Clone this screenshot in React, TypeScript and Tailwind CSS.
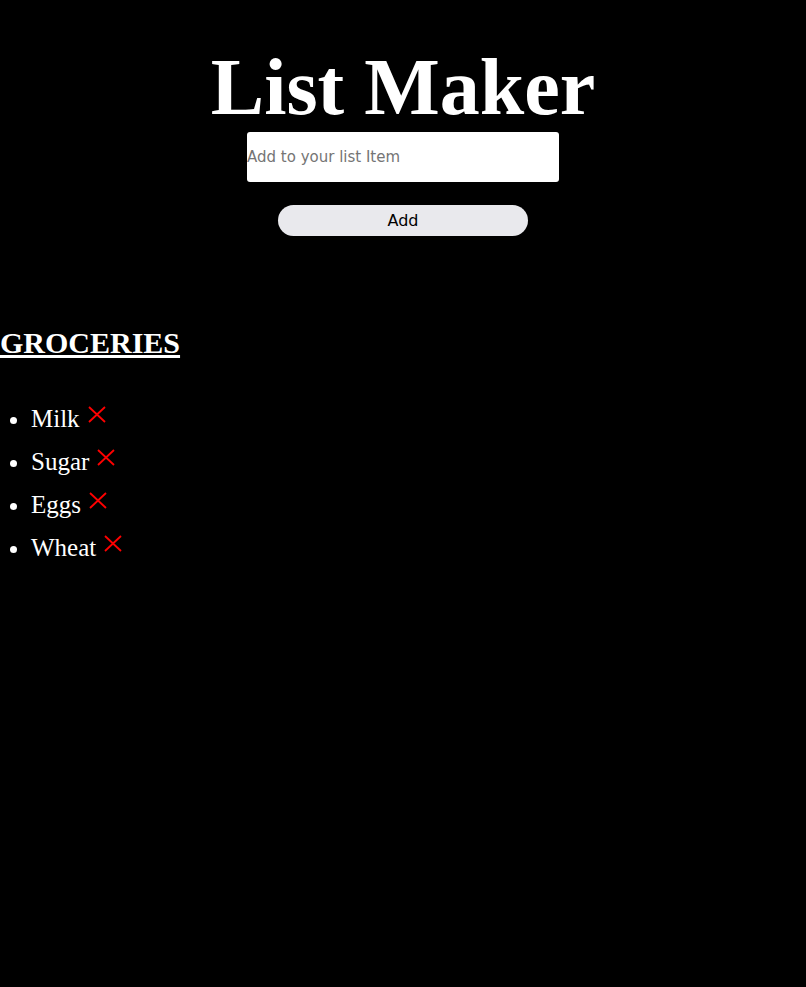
import { useState } from "react"

function RedX() {
  return (
    <svg width="18" height="17" viewBox="0 0 18 17" className="inline-block align-[4px] ml-[8px]">
      <path d="M1 1 L17 16 M17 1 L1 16" stroke="#ff0000" strokeWidth="1.8" fill="none" />
    </svg>
  )
}

export default function App() {
  const [items, setItems] = useState(["Milk", "Sugar", "Eggs", "Wheat"])
  const [text, setText] = useState("")

  return (
    <div className="min-h-[987px] bg-black text-white font-['Liberation_Serif',serif]">
      <div className="flex flex-col items-center pt-[42px]">
        <h1 className="text-[80px] font-bold leading-[normal]">List Maker</h1>
        <input
          value={text}
          onChange={(e) => setText(e.target.value)}
          placeholder="Add to your list Item"
          className="-mt-[1px] w-[312px] h-[50px] rounded-[3px] bg-white text-black placeholder:text-[#757575] text-[15px] font-['DejaVu_Sans',sans-serif] outline-none"
        />
        <button
          onClick={() => {
            if (text.trim()) setItems([...items, text.trim()])
            setText("")
          }}
          className="mt-[23px] w-[250px] h-[31px] rounded-full bg-[#e9e9ed] text-black text-[16px] font-['DejaVu_Sans',sans-serif]"
        >
          Add
        </button>
      </div>
      <h2 className="mt-[90px] text-[30px] font-bold underline leading-[normal]">GROCERIES</h2>
      <ul className="mt-[37px] list-disc pl-[31px] text-[25px] leading-[43px]">
        {items.map((item) => (
          <li key={item}>
            {item}
            <RedX />
          </li>
        ))}
      </ul>
    </div>
  )
}
